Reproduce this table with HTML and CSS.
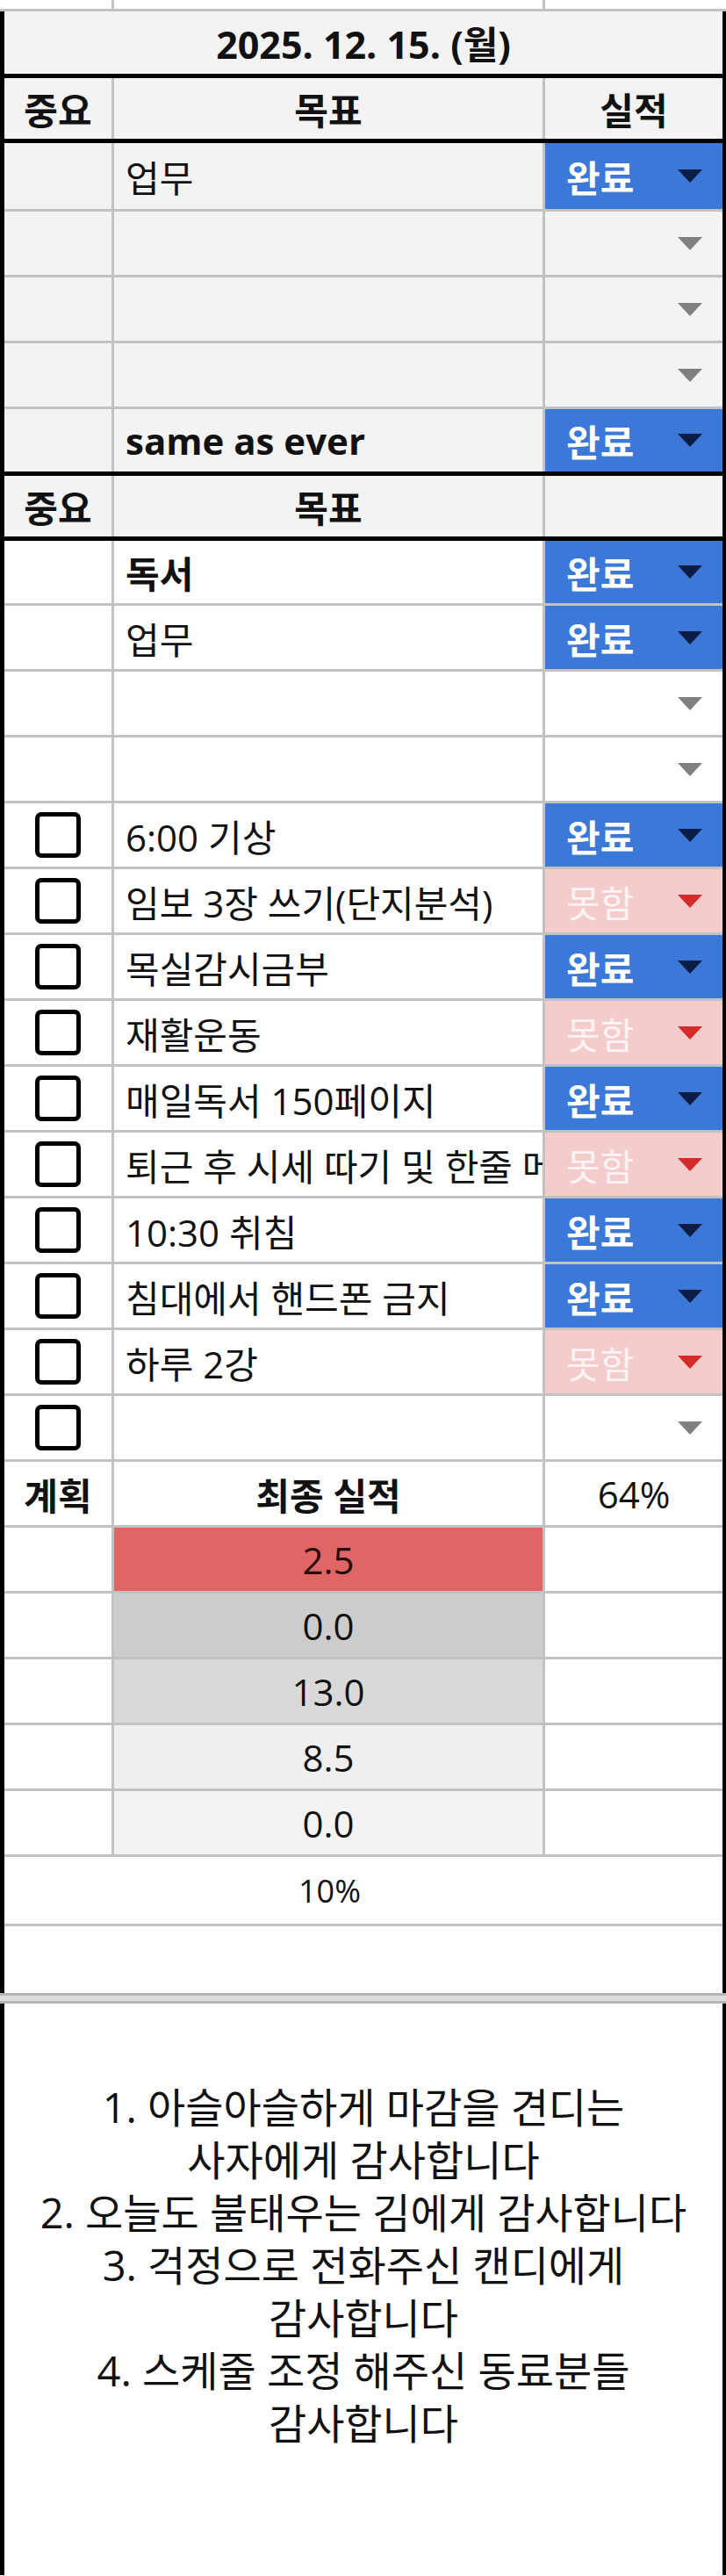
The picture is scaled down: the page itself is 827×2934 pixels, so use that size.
FILE: index.html
```
<!DOCTYPE html>
<html lang="ko">
<head>
<meta charset="utf-8">
<title>Daily sheet</title>
<link rel="stylesheet" href="styles.css">
</head>
<body>
<div class="sheet">
  <div class="row prev"><div class="cell c1"></div><div class="cell c2"></div><div class="cell c3"></div></div>
  <div class="frame">
    <div class="date">2025. 12. 15. (월)</div>
    <div class="row gray head thick"><div class="cell c1 b ctr">중요</div><div class="cell c2 b ctr">목표</div><div class="cell c3 b ctr">실적</div></div>
    <div class="row gray tall"><div class="cell c1"></div><div class="cell c2">업무</div><div class="cell c3 chip done"><span>완료</span><i class="arrow"></i></div></div>
    <div class="row gray"><div class="cell c1"></div><div class="cell c2"></div><div class="cell c3 chip dd"><i class="arrow"></i></div></div>
    <div class="row gray"><div class="cell c1"></div><div class="cell c2"></div><div class="cell c3 chip dd"><i class="arrow"></i></div></div>
    <div class="row gray"><div class="cell c1"></div><div class="cell c2"></div><div class="cell c3 chip dd"><i class="arrow"></i></div></div>
    <div class="row gray short thick"><div class="cell c1"></div><div class="cell c2 b">same as ever</div><div class="cell c3 chip done"><span>완료</span><i class="arrow"></i></div></div>
    <div class="row gray head thick"><div class="cell c1 b ctr">중요</div><div class="cell c2 b ctr">목표</div><div class="cell c3"></div></div>
    <div class="row short"><div class="cell c1"></div><div class="cell c2 b">독서</div><div class="cell c3 chip done"><span>완료</span><i class="arrow"></i></div></div>
    <div class="row"><div class="cell c1"></div><div class="cell c2">업무</div><div class="cell c3 chip done"><span>완료</span><i class="arrow"></i></div></div>
    <div class="row"><div class="cell c1"></div><div class="cell c2"></div><div class="cell c3 chip dd"><i class="arrow"></i></div></div>
    <div class="row"><div class="cell c1"></div><div class="cell c2"></div><div class="cell c3 chip dd"><i class="arrow"></i></div></div>
    <div class="row"><div class="cell c1 ctr"><span class="cb"></span></div><div class="cell c2">6:00 기상</div><div class="cell c3 chip done"><span>완료</span><i class="arrow"></i></div></div>
    <div class="row"><div class="cell c1 ctr"><span class="cb"></span></div><div class="cell c2">임보 3장 쓰기(단지분석)</div><div class="cell c3 chip fail"><span>못함</span><i class="arrow"></i></div></div>
    <div class="row"><div class="cell c1 ctr"><span class="cb"></span></div><div class="cell c2">목실감시금부</div><div class="cell c3 chip done"><span>완료</span><i class="arrow"></i></div></div>
    <div class="row"><div class="cell c1 ctr"><span class="cb"></span></div><div class="cell c2">재활운동</div><div class="cell c3 chip fail"><span>못함</span><i class="arrow"></i></div></div>
    <div class="row"><div class="cell c1 ctr"><span class="cb"></span></div><div class="cell c2">매일독서 150페이지</div><div class="cell c3 chip done"><span>완료</span><i class="arrow"></i></div></div>
    <div class="row"><div class="cell c1 ctr"><span class="cb"></span></div><div class="cell c2">퇴근 후 시세 따기 및 한줄 메모</div><div class="cell c3 chip fail"><span>못함</span><i class="arrow"></i></div></div>
    <div class="row"><div class="cell c1 ctr"><span class="cb"></span></div><div class="cell c2">10:30 취침</div><div class="cell c3 chip done"><span>완료</span><i class="arrow"></i></div></div>
    <div class="row"><div class="cell c1 ctr"><span class="cb"></span></div><div class="cell c2">침대에서 핸드폰 금지</div><div class="cell c3 chip done"><span>완료</span><i class="arrow"></i></div></div>
    <div class="row"><div class="cell c1 ctr"><span class="cb"></span></div><div class="cell c2">하루 2강</div><div class="cell c3 chip fail"><span>못함</span><i class="arrow"></i></div></div>
    <div class="row"><div class="cell c1 ctr"><span class="cb"></span></div><div class="cell c2"></div><div class="cell c3 chip dd"><i class="arrow"></i></div></div>
    <div class="row"><div class="cell c1 b ctr">계획</div><div class="cell c2 b ctr">최종 실적</div><div class="cell c3 ctr">64%</div></div>
    <div class="row"><div class="cell c1"></div><div class="cell c2 ctr v-red">2.5</div><div class="cell c3"></div></div>
    <div class="row"><div class="cell c1"></div><div class="cell c2 ctr v-g1">0.0</div><div class="cell c3"></div></div>
    <div class="row"><div class="cell c1"></div><div class="cell c2 ctr v-g2">13.0</div><div class="cell c3"></div></div>
    <div class="row"><div class="cell c1"></div><div class="cell c2 ctr v-g3">8.5</div><div class="cell c3"></div></div>
    <div class="row"><div class="cell c1"></div><div class="cell c2 ctr v-g4">0.0</div><div class="cell c3"></div></div>
    <div class="row merged"><div class="cell c1"></div><div class="cell c2 ctr small">10%</div><div class="cell c3"></div></div>
    <div class="row merged last"><div class="cell c1"></div><div class="cell c2"></div><div class="cell c3"></div></div>
  </div>
  <div class="separator"></div>
  <div class="frame notes">
    <p class="note-text">1. 아슬아슬하게 마감을 견디는<br>사자에게 감사합니다<br>2. 오늘도 불태우는 김에게 감사합니다<br>3. 걱정으로 전화주신 캔디에게<br>감사합니다<br>4. 스케줄 조정 해주신 동료분들<br>감사합니다</p>
  </div>
</div>
</body>
</html>
```

FILE: styles.css
```
html, body {
  margin: 0;
  padding: 0;
  background: #ffffff;
}

body {
  font-family: "Open Sans", "Noto Sans CJK KR", sans-serif;
  font-size: 42px;
  color: #111111;
}

.sheet {
  width: 827px;
}

.frame {
  border-left: 5px solid #000000;
  border-right: 4px solid #000000;
}

.row {
  display: grid;
  grid-template-columns: 125px 491px 202px;
  height: 72px;
  border-bottom: 3px solid #c2c2c2;
  background: #ffffff;
}

.row.prev {
  grid-template-columns: 130px 491px 206px;
  height: 10px;
}

.row.gray { background: #f3f3f3; }
.row.tall { height: 75px; }
.row.short { height: 71px; }
.row.head { height: 69px; }
.row.thick { border-bottom: 5px solid #000000; }
.row.merged { height: 76px; }
.row.merged .cell { border-right: none; }
.row.last { border-bottom: none; }

.cell {
  box-sizing: border-box;
  display: flex;
  align-items: center;
  overflow: hidden;
  white-space: nowrap;
  min-width: 0;
}

.c1, .c2 { border-right: 3px solid #c2c2c2; }
.c2 { padding-left: 13px; }
.ctr { justify-content: center; }
.c2.ctr { padding-left: 0; }
.b { font-weight: 700; }

.date {
  height: 71px;
  border-bottom: 5px solid #000000;
  background: #f3f3f3;
  display: flex;
  align-items: center;
  justify-content: center;
  font-weight: 700;
  font-size: 43px;
}

.chip {
  justify-content: space-between;
  padding: 0 23px 0 24px;
}

.chip.dd { justify-content: flex-end; }

.arrow {
  width: 0;
  height: 0;
  border-left: 14px solid transparent;
  border-right: 14px solid transparent;
  border-top: 15px solid #808080;
}

.chip.done {
  background: #3c78d8;
  color: #ffffff;
  font-weight: 700;
}
.chip.done .arrow { border-top-color: #0c1d45; }

.chip.fail {
  background: #f4cccc;
  color: #fcf3f3;
}
.chip.fail .arrow { border-top-color: #d32a2a; }

.cb {
  box-sizing: border-box;
  width: 52px;
  height: 52px;
  border: 5px solid #000000;
  border-radius: 7px;
}

.v-red { background: #e06666; color: #2a0808; }
.v-g1 { background: #cccccc; }
.v-g2 { background: #d9d9d9; }
.v-g3 { background: #efefef; }
.v-g4 { background: #f3f3f3; }
.small { font-size: 36px; }

.separator {
  height: 6px;
  border-top: 3px solid #b4b4b4;
  border-bottom: 3px solid #b4b4b4;
  background: #dedede;
}

.notes {
  height: 651px;
  box-sizing: border-box;
  padding-top: 88px;
}

.note-text {
  margin: 0;
  text-align: center;
  font-size: 47px;
  line-height: 60px;
  white-space: nowrap;
}
```
